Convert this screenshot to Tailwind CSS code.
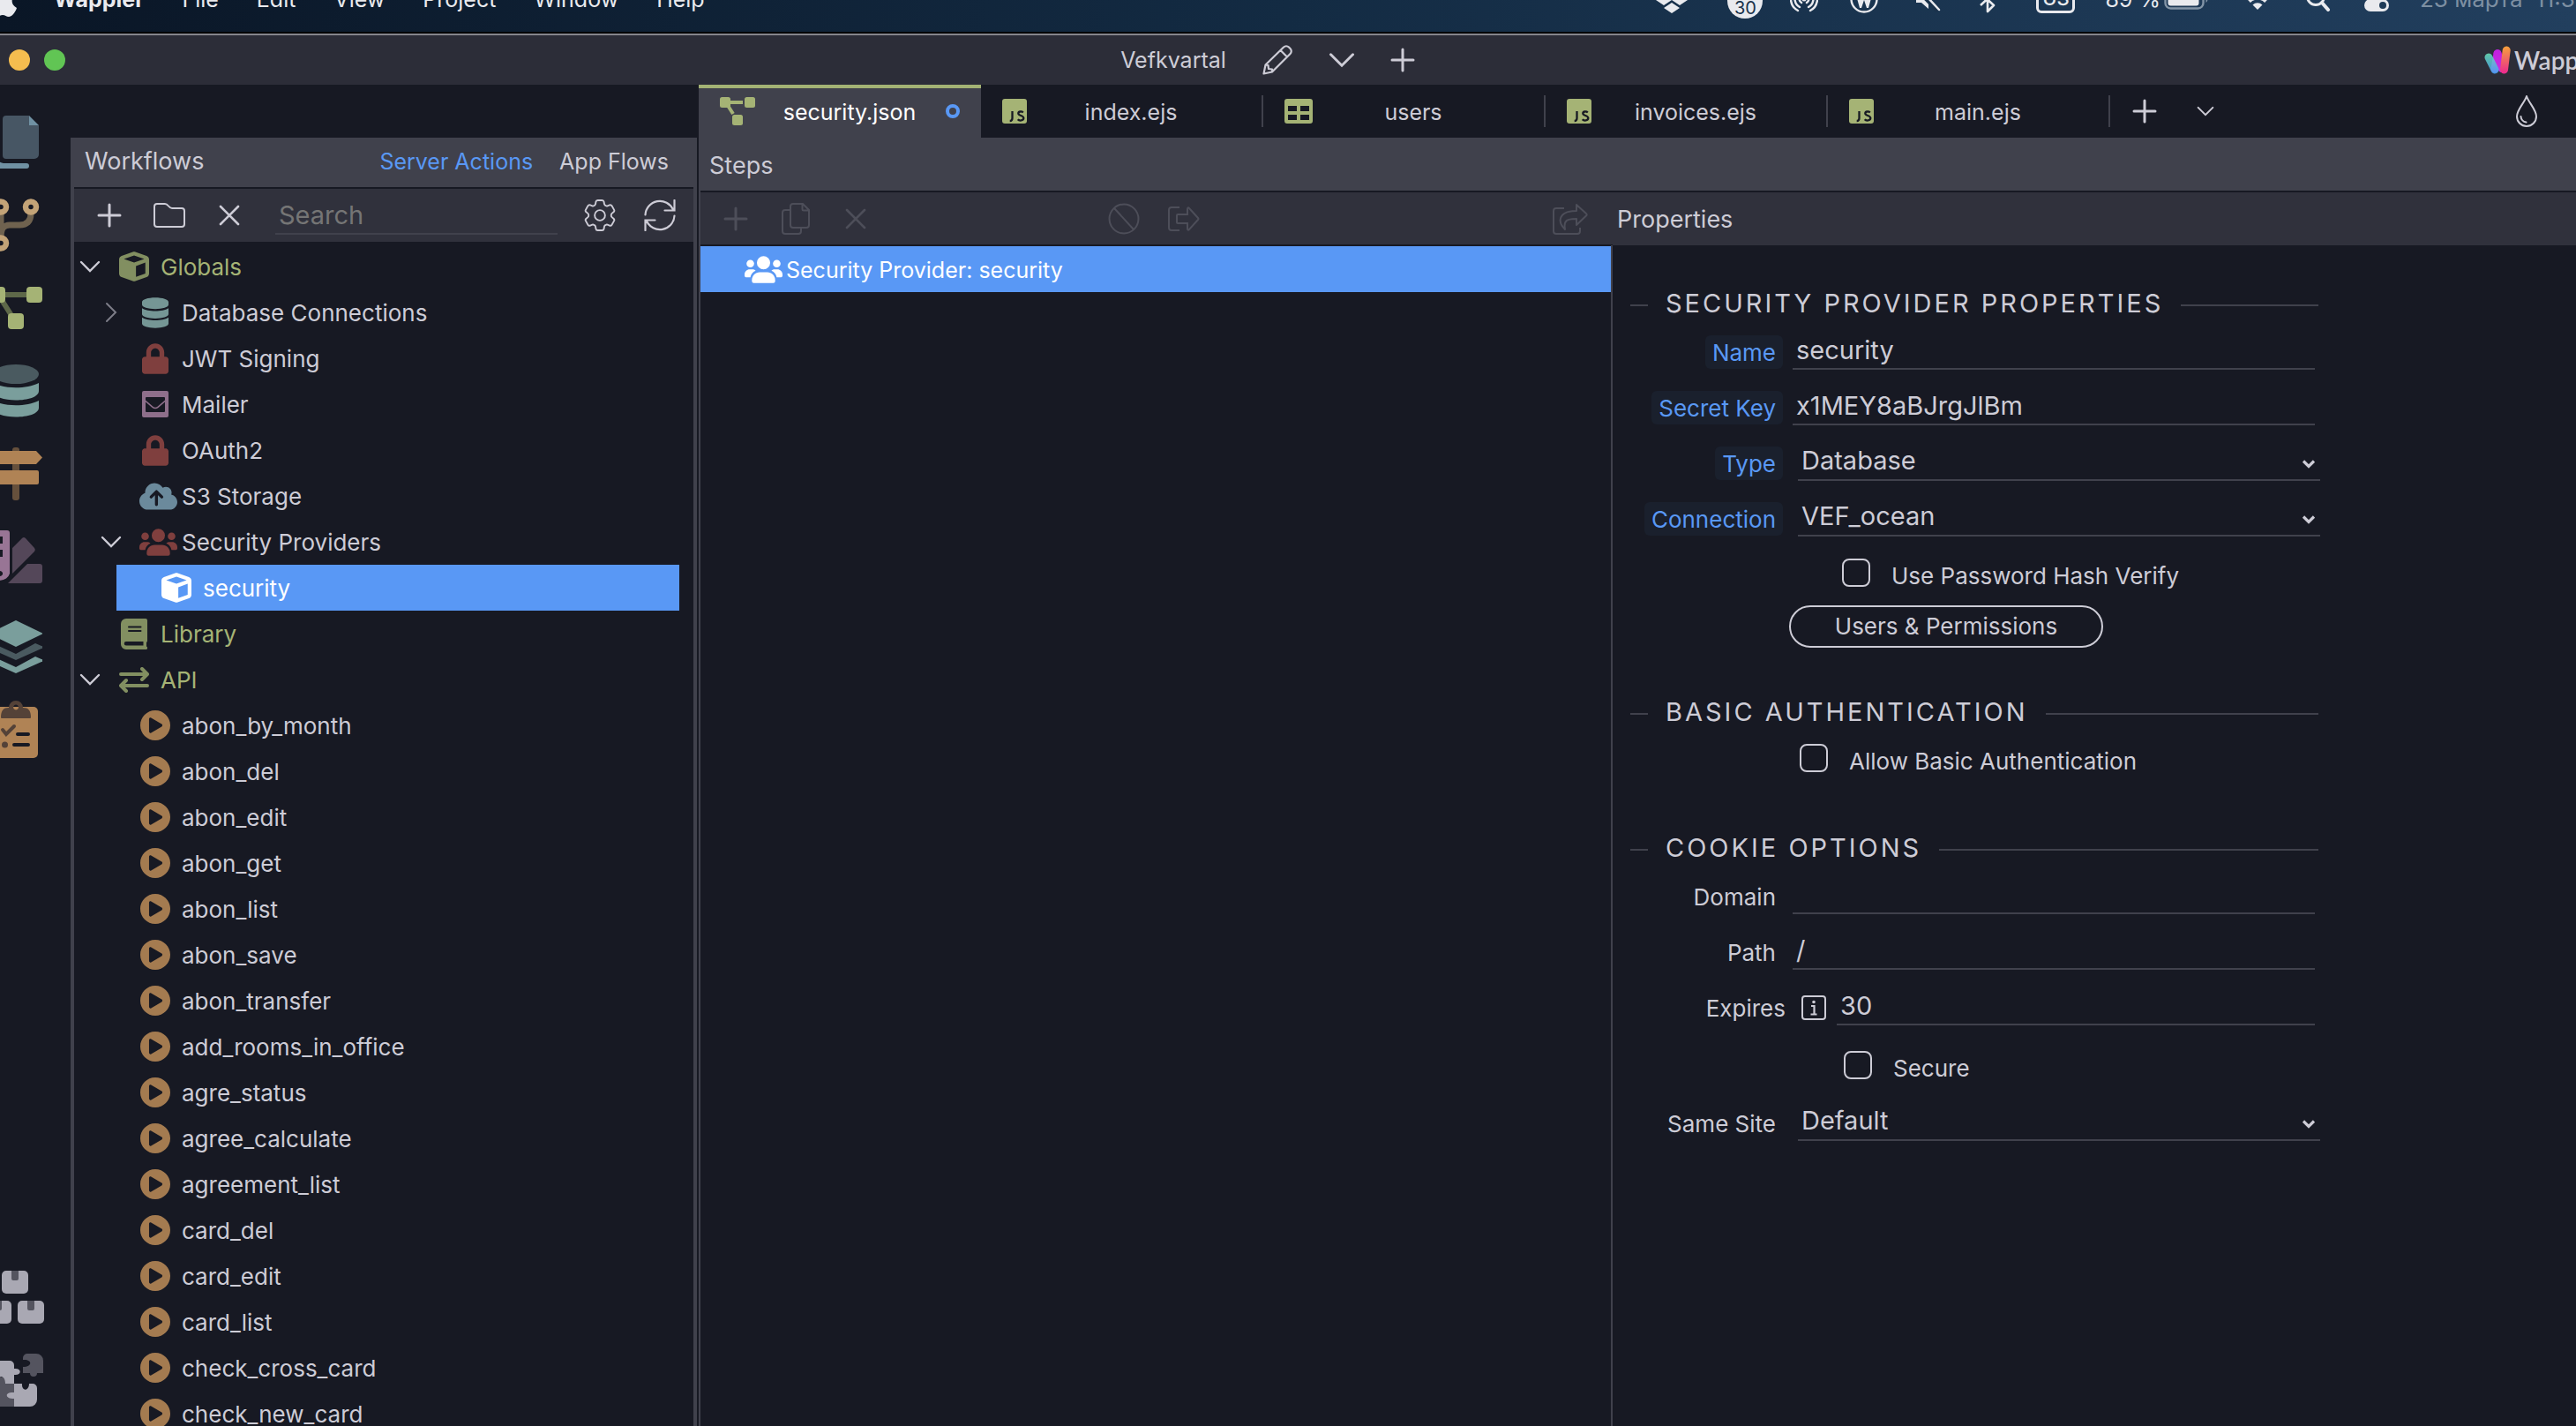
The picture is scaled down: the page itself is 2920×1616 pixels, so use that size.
<!DOCTYPE html>
<html lang="en">
<head>
    <meta charset="UTF-8">
    <meta name="viewport" content="width=device-width, initial-scale=1.0">
    <title>Wappler - Vefkvartal</title>
    <script src="https://cdn.jsdelivr.net/npm/@tailwindcss/browser@4"></script>
</head>
<body class="h-screen overflow-hidden flex flex-col bg-[#171923] text-[#cdccd6] font-['Inter','Liberation_Sans',sans-serif] text-[25px] leading-8">

    <!-- Icon sprite -->
    <svg class="hidden">
        <symbol id="plus" viewBox="0 0 28 28"><path d="M14 2v24M2 14h24" fill="none" stroke="currentColor" stroke-width="3" stroke-linecap="round"/></symbol>
        <symbol id="times" viewBox="0 0 24 24"><path d="M2 2l20 20M22 2L2 22" fill="none" stroke="currentColor" stroke-width="2.6" stroke-linecap="round"/></symbol>
        <symbol id="down" viewBox="0 0 24 14"><path d="M2 2l10 10L22 2" fill="none" stroke="currentColor" stroke-width="2.4" stroke-linecap="round"/></symbol>
        <symbol id="right" viewBox="0 0 14 24"><path d="M2 2l10 10L2 22" fill="none" stroke="currentColor" stroke-width="2" stroke-linecap="round"/></symbol>
        <symbol id="cube" viewBox="0 0 512 512"><path fill="currentColor" d="M234.5 5.7c13.9-5 29.1-5 43.1 0l192 68.6C495 83.4 512 107.5 512 134.6V377.4c0 27-17 51.2-42.5 60.3l-192 68.6c-13.9 5-29.1 5-43.1 0l-192-68.6C17 428.6 0 404.5 0 377.4V134.6c0-27 17-51.2 42.5-60.3l192-68.6zM256 66L82.3 128 256 190l173.7-62L256 66zm32 368.6l160-57.1v-188L288 246.6v188z"/></symbol>
        <symbol id="database" viewBox="0 0 448 512"><path fill="currentColor" d="M448 73.143v45.714C448 159.143 347.667 192 224 192S0 159.143 0 118.857V73.143C0 32.857 100.333 0 224 0s224 32.857 224 73.143zM448 176v102.857C448 319.143 347.667 352 224 352S0 319.143 0 278.857V176c48.125 33.143 136.208 48.572 224 48.572S399.874 209.143 448 176zm0 160v102.857C448 479.143 347.667 512 224 512S0 479.143 0 438.857V336c48.125 33.143 136.208 48.572 224 48.572S399.874 369.143 448 336z"/></symbol>
        <symbol id="lock" viewBox="0 0 448 512"><path fill="currentColor" d="M400 224h-24v-72C376 68.2 307.8 0 224 0S72 68.2 72 152v72H48c-26.5 0-48 21.5-48 48v192c0 26.5 21.5 48 48 48h352c26.5 0 48-21.5 48-48V272c0-26.5-21.5-48-48-48zm-104 0H152v-72c0-39.7 32.3-72 72-72s72 32.3 72 72v72z"/></symbol>
        <symbol id="mail" viewBox="0 0 30 30"><path fill="currentColor" fill-rule="evenodd" d="M2 0h26a2 2 0 0 1 2 2v26a2 2 0 0 1-2 2H2a2 2 0 0 1-2-2V2a2 2 0 0 1 2-2zM5 7h20a1 1 0 0 1 1 1v2.500l-8.500 7.200a4 4 0 0 1-5 0L4 10.500V8a1 1 0 0 1 1-1zM4 12.500l7.500 6.400a5.500 5.500 0 0 0 7 0L26 12.500V23a1 1 0 0 1-1 1H5a1 1 0 0 1-1-1z"/></symbol>
        <symbol id="cloud" viewBox="0 0 640 456"><path fill="currentColor" d="M144 452C64.500 452 0 387.500 0 308c0-62.800 40.200-116.200 96.200-135.900c-.1-2.700-.2-5.400-.2-8.100c0-88.400 71.600-160 160-160c59.300 0 111 32.200 138.700 80.200C409.900 74 428.300 68 448 68c53 0 96 43 96 96c0 12.200-2.300 23.800-6.400 34.600C596 210.400 640 262.100 640 324c0 70.700-57.300 128-128 128H144z"/><path d="M288 366V158M198 238l90-90 90 90" fill="none" stroke="#171923" stroke-width="50" stroke-linecap="round" stroke-linejoin="round"/></symbol>
        <symbol id="users" viewBox="0 0 640 456"><g fill="currentColor"><circle cx="320" cy="112" r="112"/><circle cx="97" cy="128" r="64"/><circle cx="543" cy="128" r="64"/><path d="M256 273h128c73 0 132 59 132 132v20a31 31 0 0 1-31 31H155a31 31 0 0 1-31-31v-20c0-73 59-132 132-132z"/><path d="M86 223h50c20 0 38 8 50 22-48 20-78 58-88 112H24c-13 0-24-11-24-24v-24c0-47 39-86 86-86zM554 223h-50c-20 0-38 8-50 22 48 20 78 58 88 112h74c13 0 24-11 24-24v-24c0-47-39-86-86-86z"/></g></symbol>
        <symbol id="book" viewBox="0 0 30 35"><path fill="currentColor" fill-rule="evenodd" d="M6 0h22a2 2 0 0 1 2 2v23c0 1-.5 1.600-1 2v4.500c1 .5 1 1 1 1.800a1.500 1.500 0 0 1-1.500 1.700H6a6 6 0 0 1-6-6V6a6 6 0 0 1 6-6zM9 8.500a1 1 0 0 0 0 2h13.500a1 1 0 0 0 0-2zM9 13a1 1 0 0 0 0 2h13.500a1 1 0 0 0 0-2zM6 26a2.200 2.200 0 0 0 0 4.500h19.500V26z"/></symbol>
        <symbol id="swap" viewBox="0 0 34 29"><path d="M2 8h28M26 2l6 6-6 6M32 21H4M8 15l-6 6 6 6" fill="none" stroke="currentColor" stroke-width="4" stroke-linecap="round" stroke-linejoin="round"/></symbol>
        <symbol id="play" viewBox="0 0 512 512"><path fill="currentColor" d="M256 0C115 0 0 115 0 256s115 256 256 256 256-115 256-256S397 0 256 0zm109 277l-180 106c-16 9-35-2-35-20V149c0-18 19-30 35-20l180 106c17 10 17 32 0 42z"/></symbol>
        <symbol id="js" viewBox="0 0 28 28"><rect width="28" height="28" rx="3" fill="#a5b375"/><path d="M11.500 14v8c0 2-.8 3-2.800 3M23.800 15.500c-1.500-1.500-5.500-1.500-5.500 1 0 3 6 2 6 5.300 0 3.200-5 3.400-6.600 1.500" fill="none" stroke="#171923" stroke-width="2.300"/></symbol>
        <symbol id="flow" viewBox="0 0 40 32"><path d="M10 6h16M8 8l7 11" stroke="#a5b375" stroke-width="4"/><g fill="#a5b375"><rect width="12" height="12" rx="2.500"/><rect x="28" width="12" height="12" rx="2.500"/><rect x="14" y="20" width="12" height="12" rx="2.500"/></g></symbol>
        <symbol id="select-arrow" viewBox="0 0 16 12"><path d="M2 2.500l6 6 6-6" fill="none" stroke="#cdccd6" stroke-width="3.200"/></symbol>
    </svg>

    <!-- System menu bar, its upper half is off screen -->
    <header class="h-9 shrink-0 overflow-hidden bg-linear-to-r from-[#0a1626] via-[#132b43] to-[#223f5e] text-[#e9eaee]">
        <div class="-mt-[38px] h-[74px] flex items-center whitespace-nowrap">
            <svg class="w-5 h-9 mt-1 shrink-0" viewBox="0 0 20 36"><path fill="currentColor" d="M-12 18C-12 8-4 5 3 8c6-3 12-1 15 3-6 4-6 11 1 15-2 6-6 10-9 10-3 0-4-2-7-2s-4 2-7 2c-4 0-8-8-8-18z"/></svg>
            <nav class="flex items-center pl-[41px] gap-[43px]">
                <b>Wappler</b><span>File</span><span>Edit</span><span>View</span><span>Project</span><span>Window</span><span>Help</span>
            </nav>
            <div class="ml-auto flex items-center shrink-0">
                <svg class="w-[38px] h-[34px]" viewBox="0 0 38 34"><g fill="currentColor"><path d="M10 0l9 6-9 6-9-6zM28 0l9 6-9 6-9-6zM10 12l9 6-9 6-9-6zM28 12l9 6-9 6-9-6zM19 21l9 6-9 6-9-6z"/></g></svg>
                <div class="ml-11 w-10 h-10 mt-1 rounded-full bg-[#e9eaee] text-[#1a324b] text-xl leading-6 flex items-end justify-center">30</div>
                <svg class="ml-[31px] w-8 h-8" viewBox="0 0 32 32"><g fill="none" stroke="currentColor" stroke-width="2.500" stroke-linecap="round"><path d="M9 29a15 15 0 1 1 14 0"/><path d="M11 25a10.500 10.500 0 1 1 10 0"/><path d="M13 20a5.500 5.500 0 1 1 6 0"/></g><circle cx="16" cy="16" r="2.500" fill="currentColor"/></svg>
                <svg class="ml-9 w-8 h-8" viewBox="0 0 32 32"><circle cx="16" cy="16" r="14.500" fill="none" stroke="currentColor" stroke-width="2.400"/><path fill="currentColor" d="M6 8h20l-5 18h-2l-3-9-3 9h-2z"/></svg>
                <svg class="ml-10 w-8 h-8" viewBox="0 0 32 32"><path fill="currentColor" d="M3 10h6l8-7v24l-8-7H3z"/><path d="M1 1l27 28" stroke="#1a324b" stroke-width="6"/><path d="M4 1l25 27" stroke="currentColor" stroke-width="2.500" stroke-linecap="round"/></svg>
                <svg class="ml-10 w-6 h-8" viewBox="0 0 24 32"><path d="M4 9l15 14-7 7V2l7 7L4 23" fill="none" stroke="currentColor" stroke-width="2.600" stroke-linejoin="round"/></svg>
                <div class="ml-[43px] w-11 h-8 border-3 border-[#e9eaee] rounded-md text-[22px] leading-6 font-medium text-center">US</div>
                <span class="ml-[34px]">89 %</span>
                <svg class="ml-1 w-[52px] h-6" viewBox="0 0 52 24"><rect x="1.500" y="1.500" width="43" height="21" rx="6" fill="none" stroke="#8294a6" stroke-width="2.400"/><rect x="4.500" y="4.500" width="35" height="15" rx="3" fill="currentColor"/><path d="M47.500 8a5 5 0 0 1 0 8z" fill="#8294a6"/></svg>
                <svg class="ml-9 w-9 h-6" viewBox="0 0 36 24"><path d="M3 9a21 21 0 0 1 30 0M8.500 14.500a13.500 13.500 0 0 1 19 0" fill="none" stroke="currentColor" stroke-width="4"/><path fill="currentColor" d="M18 24l-5.500-5.500a8 8 0 0 1 11 0z"/></svg>
                <svg class="ml-[34px] w-8 h-7" viewBox="0 0 32 28"><circle cx="14" cy="11" r="9.500" fill="none" stroke="currentColor" stroke-width="3"/><path d="M21 18l7 8" stroke="currentColor" stroke-width="4" stroke-linecap="round"/></svg>
                <svg class="ml-9 w-8 h-7" viewBox="0 0 32 28"><rect x="2" y="1" width="26" height="10" rx="5" fill="none" stroke="currentColor" stroke-width="2.400"/><rect x="1" y="14" width="28" height="14" rx="7" fill="currentColor"/><circle cx="22" cy="21" r="4" fill="#1f3b57"/></svg>
                <div class="ml-8 w-[177px] overflow-hidden text-[26px] text-[#7d8fa2]">23 марта&nbsp; 11:35</div>
            </div>
        </div>
    </header>

    <!-- Window title bar -->
    <div class="h-[60px] shrink-0 border-t-2 border-black bg-[#2c2d38]">
        <div class="h-[58px] border-t-2 border-[#85858c] grid grid-cols-[1fr_auto_1fr] items-center">
            <div class="flex gap-4 pl-[10px]">
                <span class="size-6 rounded-full bg-[#f5bd4f]"></span>
                <span class="size-6 rounded-full bg-[#61c554]"></span>
            </div>
            <div class="flex items-center pr-[46px]">
                <span>Vefkvartal</span>
                <button class="ml-10" aria-label="Edit project"><svg class="w-9 h-9" viewBox="0 0 36 36"><path d="M2.500 33.500l2-10L25 3.500a4.200 4.200 0 0 1 6 0l1.500 1.500a4.200 4.200 0 0 1 0 6L12 31.500zM21.500 7l7.500 7.500M4.500 23.500l3 .5.5 4 4 .5v3" fill="none" stroke="currentColor" stroke-width="2.200" stroke-linejoin="round"/></svg></button>
                <button class="ml-10" aria-label="Projects"><svg class="w-[30px] h-[18px]"><use href="#down"/></svg></button>
                <button class="ml-10" aria-label="Add project"><svg class="w-7 h-7"><use href="#plus"/></svg></button>
            </div>
            <div class="justify-self-end w-[104px] flex items-center gap-1 overflow-hidden">
                <svg class="w-[30px] h-8 shrink-0" viewBox="0 0 30 32">
                    <defs>
                        <linearGradient id="w1" gradientUnits="userSpaceOnUse" x1="0" y1="8" x2="0" y2="31"><stop stop-color="#6be3b8"/><stop offset="1" stop-color="#45a4f5"/></linearGradient>
                        <linearGradient id="w2" gradientUnits="userSpaceOnUse" x1="0" y1="4" x2="0" y2="31"><stop stop-color="#c21fe0"/><stop offset="1" stop-color="#c92fe0"/></linearGradient>
                        <linearGradient id="w3" gradientUnits="userSpaceOnUse" x1="0" y1="0" x2="0" y2="31"><stop stop-color="#f6a33a"/><stop offset="1" stop-color="#ec2a8e"/></linearGradient>
                    </defs>
                    <g stroke-width="9" stroke-linecap="round">
                        <path d="M15 8.500l5 17" stroke="url(#w2)"/>
                        <path d="M15 9l-3 17" stroke="url(#w2)"/>
                        <path d="M5 13l7 14" stroke="url(#w1)" stroke-opacity=".85"/>
                        <path d="M25.200 5l-2.700 22" stroke="url(#w3)"/>
                    </g>
                </svg>
                <span class="text-[28px] font-semibold font-['Lato',sans-serif]">Wappler</span>
            </div>
        </div>
    </div>

    <div class="flex flex-1 min-h-0">
        <!-- Manager rail -->
        <aside class="w-20 shrink-0 flex flex-col pt-[35px] pb-[22px]">
            <div class="flex flex-col gap-[34px]">
                <svg class="w-12 h-[60px]" viewBox="0 0 48 60"><path fill="#475664" d="M7 0h26v11h11v33a5 5 0 0 1-5 5H7a4 4 0 0 1-4-4V4a4 4 0 0 1 4-4z"/><path fill="#7091a3" d="M33 0l11 11H33zM-8 44C-4 52 0 53 4 54h26a3 3 0 0 1 0 6H0l-8-2z"/></svg>
                <svg class="w-12 h-[60px]" viewBox="0 0 48 60"><path d="M1 15v30c0-11 3-15 10-15h11c9 0 13-5 13-13" fill="none" stroke="#6f624f" stroke-width="7"/><g fill="none" stroke="#c3a377" stroke-width="6.500"><circle cx="1" cy="9.500" r="6"/><circle cx="35" cy="9.500" r="6"/><circle cx="1" cy="50.500" r="6"/></g></svg>
                <svg class="w-12 h-[60px]" viewBox="0 0 48 60"><path d="M0 15h32M0 18l14 22" stroke="#5e6849" stroke-width="6"/><g fill="#a5b375"><rect x="-12" y="6" width="18" height="18" rx="4"/><rect x="30" y="6" width="18" height="18" rx="4"/><rect x="9" y="36" width="18" height="18" rx="4"/></g></svg>
                <svg class="w-12 h-[60px]" viewBox="0 0 48 60"><ellipse cx="18" cy="11" rx="26" ry="11" fill="#4a5a60"/><path fill="#7a9e9c" d="M-8 21c14 7 38 7 52 0v9c0 14-52 14-52 0zM-8 41c14 7 38 7 52 0v8c0 14-52 14-52 0z"/></svg>
                <svg class="w-12 h-[60px]" viewBox="0 0 48 60"><rect x="14" width="8" height="60" rx="3" fill="#66503c"/><path fill="#b08355" d="M-4 4h45l7 7.500-7 7.500H-4zM-10 26h52a2 2 0 0 1 2 2v12a2 2 0 0 1-2 2h-52z"/></svg>
                <svg class="w-12 h-[60px]" viewBox="0 0 48 60"><path fill="#544759" d="M14 20L25 9a3 3 0 0 1 4 0l10 11a3 3 0 0 1 0 4L14 49zM9 60l22-22h14a3 3 0 0 1 3 3v16a3 3 0 0 1-3 3z"/><path fill="#987595" fill-rule="evenodd" d="M-10 0H8a3 3 0 0 1 3 3v46a11 11 0 0 1-21 0zM-6 7v8h9V7zM-6 22v8h9v-8zM0 46a3 3 0 1 0 .1 0z"/></svg>
                <svg class="mt-2 w-12 h-[60px]" viewBox="0 0 48 60"><path fill="#7a9e9c" d="M18 0l29 14a1 1 0 0 1 0 2L18 30-11 16v-2z"/><path fill="#4a5a60" d="M-8 26l26 12 22-12 7 3a1 1 0 0 1 0 3L18 45-11 32z"/><path fill="#7a9e9c" d="M-8 41l26 12 22-12 7 3a1 1 0 0 1 0 3L18 60-11 47z"/></svg>
                <svg class="-mt-1 w-12 h-[66px]" viewBox="0 0 48 66"><path fill="#b08355" d="M0 8h38a5 5 0 0 1 5 5v48a5 5 0 0 1-5 5H0z"/><path fill="#544238" fill-rule="evenodd" d="M1 20c0-8 3-11 9-11a8 8 0 0 1 16 0c6 0 9 3 9 11a1 1 0 0 1-1 1H2a1 1 0 0 1-1-1zM18 5.500a3 3 0 1 0 .1 0z"/><path d="M3 34l4 5 9-9" fill="none" stroke="#544238" stroke-width="4" stroke-linecap="round"/><circle cx="5.500" cy="51" r="3.500" fill="#544238"/><path d="M20 39h12M16 51h16" stroke="#171923" stroke-width="4" stroke-linecap="round"/></svg>
            </div>
            <div class="mt-auto flex flex-col gap-[34px]">
                <svg class="w-[52px] h-[60px]" viewBox="0 0 52 60"><g fill="#a9a8b3"><rect x="2" width="30" height="26" rx="5"/><rect x="-17" y="34" width="30" height="26" rx="5"/><rect x="20" y="34" width="30" height="26" rx="5"/></g><path fill="#54545f" d="M13 0h8v9a2 2 0 0 1-2 2h-4a2 2 0 0 1-2-2zM31 34h8v9a2 2 0 0 1-2 2h-4a2 2 0 0 1-2-2zM-6 34h8v9a2 2 0 0 1-2 2h-6z"/></svg>
                <svg class="w-[52px] h-[60px]" viewBox="0 0 52 60"><path fill="#54545f" d="M31 0h10a8 8 0 0 1 8 8v14h-7a4 4 0 0 1-8 0h-8v-7c11 0 11-9 0-8V5a5 5 0 0 1 5-5zM-6 28l10-2 12 8v26H-6z"/><path fill="#a9a8b3" d="M-6 8h17a5 5 0 0 1 5 5v4c9-1 9 8 0 7v10H6c0-9-6-9-6-7h-6zM16 34h9c-1 9 8 9 8 0h4a5 5 0 0 1 5 5v13a8 8 0 0 1-8 8H16V51c-11 0-11-8 0-7z"/></svg>
            </div>
        </aside>

        <!-- Workflows panel -->
        <section class="mt-[60px] w-[710px] shrink-0 flex flex-col border-x-4 border-[#40414c]">
            <div class="h-14 shrink-0 bg-[#40414c] flex items-center pl-3 pr-7 pb-[2px]">
                <h2 class="text-[27px]">Workflows</h2>
                <button class="ml-auto text-[#5998f5]">Server Actions</button>
                <button class="ml-[30px]">App Flows</button>
            </div>
            <div class="mt-[2px] h-[60px] shrink-0 bg-[#30313c] flex items-center pl-[26px] pr-5">
                <button aria-label="Add"><svg class="w-7 h-7"><use href="#plus"/></svg></button>
                <button class="ml-9" aria-label="New folder"><svg class="w-9 h-7" viewBox="0 0 36 28"><path d="M1 4a3 3 0 0 1 3-3h9c4 0 4 5 8 5h11a3 3 0 0 1 3 3v15a3 3 0 0 1-3 3H4a3 3 0 0 1-3-3z" fill="none" stroke="currentColor" stroke-width="2"/></svg></button>
                <button class="ml-[38px]" aria-label="Delete"><svg class="w-6 h-6"><use href="#times"/></svg></button>
                <input type="text" aria-label="Search" placeholder="Search" class="ml-10 flex-1 min-w-0 h-11 pl-1 text-[29px] border-b-2 border-[#40414c] placeholder:text-[#757575] outline-none">
                <button class="ml-[30px]" aria-label="Settings"><svg class="w-9 h-[38px]" viewBox="2.500 2.500 19 19"><path fill="none" stroke="currentColor" stroke-width="1" d="M9.594 3.94c.09-.542.56-.94 1.11-.94h2.593c.55 0 1.02.398 1.11.94l.213 1.281c.063.374.313.686.645.87.074.04.147.083.22.127.325.196.72.257 1.075.124l1.217-.456a1.125 1.125 0 0 1 1.37.49l1.296 2.247a1.125 1.125 0 0 1-.26 1.431l-1.003.827c-.293.241-.438.613-.43.992a7.723 7.723 0 0 1 0 .255c-.008.378.137.75.43.991l1.004.827c.424.35.534.955.26 1.43l-1.298 2.247a1.125 1.125 0 0 1-1.369.491l-1.217-.456c-.355-.133-.75-.072-1.076.124a6.47 6.47 0 0 1-.22.128c-.331.183-.581.495-.644.869l-.213 1.281c-.09.543-.56.94-1.11.94h-2.594c-.55 0-1.019-.398-1.11-.94l-.213-1.281c-.062-.374-.312-.686-.644-.87a6.52 6.52 0 0 1-.22-.127c-.325-.196-.72-.257-1.076-.124l-1.217.456a1.125 1.125 0 0 1-1.369-.49l-1.297-2.247a1.125 1.125 0 0 1 .26-1.431l1.004-.827c.292-.24.437-.613.43-.991a6.932 6.932 0 0 1 0-.255c.007-.38-.138-.751-.43-.992l-1.004-.827a1.125 1.125 0 0 1-.26-1.43l1.297-2.247a1.125 1.125 0 0 1 1.37-.491l1.216.456c.356.133.751.072 1.076-.124.072-.044.146-.086.22-.128.332-.183.582-.495.644-.869l.214-1.28Z"/><circle cx="12" cy="12" r="3.100" fill="none" stroke="currentColor" stroke-width="1"/></svg></button>
                <button class="ml-8" aria-label="Refresh"><svg class="w-9 h-9" viewBox="0 0 36 36"><path d="M1.500 17.500A16.500 16.500 0 0 1 33 11.500M34.500 1v11.500H23.500M34.500 18.500A16.500 16.500 0 0 1 3 24.500M1.500 35V23.500H12.500" fill="none" stroke="currentColor" stroke-width="2.200" stroke-linecap="round"/></svg></button>
            </div>
            <div id="tree" class="pt-[2px] flex-1 min-h-0 overflow-hidden text-[26px]"></div>
        </section>

        <!-- Editor -->
        <main class="ml-[2px] flex-1 min-w-0 flex flex-col">
            <div class="h-[60px] shrink-0 flex items-center">
                <button class="w-80 h-[60px] shrink-0 flex items-center border-t-4 border-[#a3b274] bg-[#40414c] text-white">
                    <span class="w-[70px] pl-6 pb-1"><svg class="w-10 h-8"><use href="#flow"/></svg></span>
                    <span class="flex-1 text-center pb-[2px]">security.json</span>
                    <span class="w-12 pl-2 pb-1"><i class="block size-4 rounded-full border-4 border-[#5998f5]"></i></span>
                </button>
                <button class="w-80 h-9 shrink-0 flex items-center border-r-2 border-[#40414c]">
                    <span class="w-[70px] pl-6"><svg class="size-7"><use href="#js"/></svg></span>
                    <span class="flex-1 text-center pt-[2px]">index.ejs</span><span class="w-12"></span>
                </button>
                <button class="w-80 h-9 shrink-0 flex items-center border-r-2 border-[#40414c]">
                    <span class="w-[70px] pl-6"><svg class="w-8 h-7" viewBox="0 0 32 28"><path fill="#a5b375" fill-rule="evenodd" d="M3 0h26a3 3 0 0 1 3 3v22a3 3 0 0 1-3 3H3a3 3 0 0 1-3-3V3a3 3 0 0 1 3-3zM4 8v6h10V8zM18 8v6h10V8zM4 18v6h10v-6zM18 18v6h10v-6z"/></svg></span>
                    <span class="flex-1 text-center pt-[2px]">users</span><span class="w-12"></span>
                </button>
                <button class="w-80 h-9 shrink-0 flex items-center border-r-2 border-[#40414c]">
                    <span class="w-[70px] pl-6"><svg class="size-7"><use href="#js"/></svg></span>
                    <span class="flex-1 text-center pt-[2px]">invoices.ejs</span><span class="w-12"></span>
                </button>
                <button class="w-80 h-9 shrink-0 flex items-center border-r-2 border-[#40414c]">
                    <span class="w-[70px] pl-6"><svg class="size-7"><use href="#js"/></svg></span>
                    <span class="flex-1 text-center pt-[2px]">main.ejs</span><span class="w-12"></span>
                </button>
                <button class="ml-[25px]" aria-label="New file"><svg class="size-7"><use href="#plus"/></svg></button>
                <button class="ml-[45px]" aria-label="All files"><svg class="w-5 h-3"><use href="#down"/></svg></button>
                <button class="ml-auto mr-[43px]" aria-label="Theme"><svg class="w-[26px] h-9" viewBox="0 0 26 36"><path d="M13 1c-2 7-11 15-11 23a11 11 0 0 0 22 0C24 16 15 8 13 1zM6.500 24a7 7 0 0 0 6 6.500" fill="none" stroke="currentColor" stroke-width="2" stroke-linecap="round" stroke-linejoin="round"/></svg></button>
            </div>
            <h2 class="h-[60px] shrink-0 bg-[#40414c] pl-3 pt-4 text-[27px]">Steps</h2>
            <div class="flex flex-1 min-h-0 border-l-2 border-[#40414c]">
                <section class="w-[1034px] shrink-0 flex flex-col">
                    <div class="mt-[2px] h-[59px] shrink-0 bg-[#30313c] text-[#4d4e59] flex items-center pl-[26px] pr-7">
                        <button aria-label="Add step"><svg class="w-7 h-7"><use href="#plus"/></svg></button>
                        <button class="ml-9" aria-label="Copy step"><svg class="w-9 h-9" viewBox="0 0 36 36"><path d="M11 8H6a3 3 0 0 0-3 3v21a3 3 0 0 0 3 3h15a3 3 0 0 0 3-3v-3M15 1h11l7 7v17a3 3 0 0 1-3 3H15a3 3 0 0 1-3-3V4a3 3 0 0 1 3-3zM25.500 1v6a1.500 1.500 0 0 0 1.500 1.500h6" fill="none" stroke="currentColor" stroke-width="2"/></svg></button>
                        <button class="ml-[38px]" aria-label="Delete step"><svg class="w-6 h-6"><use href="#times"/></svg></button>
                        <button class="ml-[274px]" aria-label="Disable step"><svg class="w-9 h-9" viewBox="0 0 36 36"><circle cx="18" cy="18" r="16.500" fill="none" stroke="currentColor" stroke-width="2"/><path d="M7 6l22 24" stroke="currentColor" stroke-width="2"/></svg></button>
                        <button class="ml-8" aria-label="Extract step"><svg class="w-9 h-7" viewBox="0 0 36 28"><path d="M13 1H4a3 3 0 0 0-3 3v20a3 3 0 0 0 3 3h9M11 9h11V3c0-2 1-2 2-1l10 11a1.500 1.500 0 0 1 0 2L24 26c-1 1-2 1-2-1v-6H11a1 1 0 0 1-1-1v-8a1 1 0 0 1 1-1z" fill="none" stroke="currentColor" stroke-width="2"/></svg></button>
                        <button class="ml-auto" aria-label="Share"><svg class="w-10 h-9" viewBox="0 0 40 36"><path d="M13 6H4a3 3 0 0 0-3 3v23a3 3 0 0 0 3 3h24a3 3 0 0 0 3-3v-4M27 2l11 10a1.500 1.500 0 0 1 0 2.500L27 25v-7c-10 0-15 1-13 12C4 20 8 9 27 9z" fill="none" stroke="currentColor" stroke-width="2" stroke-linejoin="round"/></svg></button>
                    </div>
                    <div class="mt-[2px] h-[52px] shrink-0 flex items-center bg-[#5998f5] text-white pl-[50px] mr-[2px]">
                        <svg class="w-[43px] h-[31px]"><use href="#users"/></svg>
                        <span class="ml-1 pt-[2px]">Security Provider: security</span>
                    </div>
                    <div class="flex-1"></div>
                </section>

                <!-- Properties -->
                <section class="flex-1 min-w-0 flex flex-col">
                    <h2 class="mt-[2px] h-[60px] shrink-0 bg-[#30313c] pl-[5px] pt-px flex items-center text-[27px]">Properties</h2>
                    <form class="flex-1 -ml-[2px] border-l-2 border-[#40414c] pl-5 pt-[54px] text-[26px]">
                        <div class="w-[784px] max-w-full">
                            <div class="mr-1 h-6 flex items-center gap-5 leading-6 text-[29px] tracking-[3px] whitespace-nowrap">
                                <i class="mt-1 w-5 h-[2px] bg-[#40414c]"></i><h3>SECURITY PROVIDER PROPERTIES</h3><i class="mt-1 flex-1 h-[2px] bg-[#40414c]"></i>
                            </div>
                            <div class="h-[63px] flex items-end">
                                <div class="w-[173px] flex justify-end"><label for="name" class="mb-px h-[38px] leading-10 px-2 rounded-md bg-[#1a202d] text-[#5998f5]">Name</label></div>
                                <input id="name" type="text" value="security" class="ml-[11px] w-[592px] h-11 pl-1 text-[29px] border-b-2 border-[#40414c] outline-none">
                            </div>
                            <div class="h-[63px] flex items-end">
                                <div class="w-[173px] flex justify-end"><label for="key" class="mb-px h-[38px] leading-10 px-2 rounded-md bg-[#1a202d] text-[#5998f5]">Secret Key</label></div>
                                <input id="key" type="text" value="x1MEY8aBJrgJlBm" class="ml-[11px] w-[592px] h-11 pl-1 text-[29px] border-b-2 border-[#40414c] outline-none">
                            </div>
                            <div class="h-[63px] flex items-end">
                                <div class="w-[173px] flex justify-end"><label for="type" class="mb-px h-[38px] leading-10 px-2 rounded-md bg-[#1a202d] text-[#5998f5]">Type</label></div>
                                <div class="relative ml-[17px] w-[592px]">
                                    <select id="type" class="block w-full h-11 pl-1 text-[29px] appearance-none border-b-2 border-[#40414c] outline-none"><option>Database</option></select>
                                    <svg class="absolute right-[5px] bottom-[13px] w-4 h-3 pointer-events-none"><use href="#select-arrow"/></svg>
                                </div>
                            </div>
                            <div class="h-[63px] flex items-end">
                                <div class="w-[173px] flex justify-end"><label for="connection" class="mb-px h-[38px] leading-10 px-2 rounded-md bg-[#1a202d] text-[#5998f5]">Connection</label></div>
                                <div class="relative ml-[17px] w-[592px]">
                                    <select id="connection" class="block w-full h-11 pl-1 text-[29px] appearance-none border-b-2 border-[#40414c] outline-none"><option>VEF_ocean</option></select>
                                    <svg class="absolute right-[5px] bottom-[13px] w-4 h-3 pointer-events-none"><use href="#select-arrow"/></svg>
                                </div>
                            </div>
                            <div class="mt-[25px] pl-[240px] h-8 flex items-center">
                                <input id="hash" type="checkbox" class="appearance-none size-8 border-2 border-[#cdccd6] rounded-lg">
                                <label for="hash" class="ml-6 mt-2">Use Password Hash Verify</label>
                            </div>
                            <button type="button" class="mt-[21px] ml-[180px] w-[356px] h-12 border-2 border-[#cdccd6] rounded-full">Users &amp; Permissions</button>

                            <div class="mt-[61px] mr-1 h-6 flex items-center gap-5 leading-6 text-[29px] tracking-[3px] whitespace-nowrap">
                                <i class="mt-1 w-5 h-[2px] bg-[#40414c]"></i><h3>BASIC AUTHENTICATION</h3><i class="mt-1 flex-1 h-[2px] bg-[#40414c]"></i>
                            </div>
                            <div class="mt-6 pl-[192px] h-8 flex items-center">
                                <input id="basic" type="checkbox" class="appearance-none size-8 border-2 border-[#cdccd6] rounded-lg">
                                <label for="basic" class="ml-6 mt-2">Allow Basic Authentication</label>
                            </div>

                            <div class="mt-[74px] mr-1 h-6 flex items-center gap-5 leading-6 text-[29px] tracking-[3px] whitespace-nowrap">
                                <i class="mt-1 w-5 h-[2px] bg-[#40414c]"></i><h3>COOKIE OPTIONS</h3><i class="mt-1 flex-1 h-[2px] bg-[#40414c]"></i>
                            </div>
                            <div class="h-[63px] flex items-end">
                                <label for="domain" class="w-[173px] mb-px h-[38px] leading-10 px-2 text-right">Domain</label>
                                <input id="domain" type="text" class="ml-[11px] w-[592px] h-11 pl-1 text-[29px] border-b-2 border-[#40414c] outline-none">
                            </div>
                            <div class="h-[63px] flex items-end">
                                <label for="path" class="w-[173px] mb-px h-[38px] leading-10 px-2 text-right">Path</label>
                                <input id="path" type="text" value="/" class="ml-[11px] w-[592px] h-11 pl-1 text-[29px] border-b-2 border-[#40414c] outline-none">
                            </div>
                            <div class="h-[63px] flex items-end">
                                <label for="expires" class="w-[176px] mb-px h-[38px] leading-10 text-right">Expires</label>
                                <svg class="ml-[18px] mb-[6px] size-7" viewBox="0 0 28 28"><rect x="1" y="1" width="26" height="26" rx="3" fill="none" stroke="currentColor" stroke-width="2"/><path d="M11 12h3.500v9M10.500 21.500h7" fill="none" stroke="currentColor" stroke-width="2.200"/><circle cx="14" cy="7.500" r="1.800" fill="currentColor"/></svg>
                                <input id="expires" type="text" value="30" class="ml-3 w-[542px] h-11 pl-1 text-[29px] border-b-2 border-[#40414c] outline-none">
                            </div>
                            <div class="mt-[29px] pl-[242px] h-8 flex items-center">
                                <input id="secure" type="checkbox" class="appearance-none size-8 border-2 border-[#cdccd6] rounded-lg">
                                <label for="secure" class="ml-6 mt-2">Secure</label>
                            </div>
                            <div class="mt-[7px] h-[63px] flex items-end">
                                <label for="samesite" class="w-[173px] mb-px h-[38px] leading-10 px-2 text-right">Same Site</label>
                                <div class="relative ml-[17px] w-[592px]">
                                    <select id="samesite" class="block w-full h-11 pl-1 text-[29px] appearance-none border-b-2 border-[#40414c] outline-none"><option>Default</option></select>
                                    <svg class="absolute right-[5px] bottom-[13px] w-4 h-3 pointer-events-none"><use href="#select-arrow"/></svg>
                                </div>
                            </div>
                        </div>
                    </form>
                </section>
            </div>
        </main>
    </div>

    <script>
        const indent = ['pl-[6px]', 'pl-[30px]', 'ml-12 pl-[6px] mr-4 bg-[#5998f5] text-white'];
        // level, label, icon, icon classes, expander
        const rows = [
            [0, 'Globals', 'cube', 'size-[34px] text-[#828f61]', 'down'],
            [1, 'Database Connections', 'database', 'w-[30px] h-[35px] text-[#759695]', 'right'],
            [1, 'JWT Signing', 'lock', 'w-[30px] h-[35px] text-[#7f3f3e]'],
            [1, 'Mailer', 'mail', 'size-[30px] text-[#8e6f8b]'],
            [1, 'OAuth2', 'lock', 'w-[30px] h-[35px] text-[#7f3f3e]'],
            [1, 'S3 Storage', 'cloud', 'w-[43px] h-[31px] text-[#6b8a9c]'],
            [1, 'Security Providers', 'users', 'w-[43px] h-[31px] text-[#7f3f3e]', 'down'],
            [2, 'security', 'cube', 'size-[34px]'],
            [0, 'Library', 'book', 'w-[30px] h-[35px] text-[#828f61]'],
            [0, 'API', 'swap', 'w-[34px] h-[29px] text-[#828f61]', 'down'],
        ];
        ['abon_by_month', 'abon_del', 'abon_edit', 'abon_get', 'abon_list', 'abon_save', 'abon_transfer',
            'add_rooms_in_office', 'agre_status', 'agree_calculate', 'agreement_list', 'card_del', 'card_edit',
            'card_list', 'check_cross_card', 'check_new_card'
        ].forEach(name => rows.push([1, name, 'play', 'size-[34px] text-[#a47b50]']));

        const arrows = {
            down: '<svg class="w-6 h-[14px]"><use href="#down"/></svg>',
            right: '<svg class="w-[14px] h-6 text-[#7d7d88]"><use href="#right"/></svg>'
        };

        document.getElementById('tree').innerHTML = rows.map(([level, label, icon, cls, arrow]) => {
            const wide = icon === 'users' || icon === 'cloud';
            return `<div class="h-[52px] flex items-center ${indent[level]} ${level === 0 ? 'text-[#a5b375]' : ''}">
                ${arrow ? `<button class="w-6 flex justify-center text-[#cdccd6]" aria-label="Toggle ${label}">${arrows[arrow]}</button>` : '<span class="w-6"></span>'}
                <span class="ml-5 w-9 flex ${wide ? '' : 'justify-center'}"><svg class="shrink-0 ${cls}"><use href="#${icon}"/></svg></span>
                <span class="ml-3 pt-[2px]">${label}</span>
            </div>`;
        }).join('');
    </script>
</body>
</html>
